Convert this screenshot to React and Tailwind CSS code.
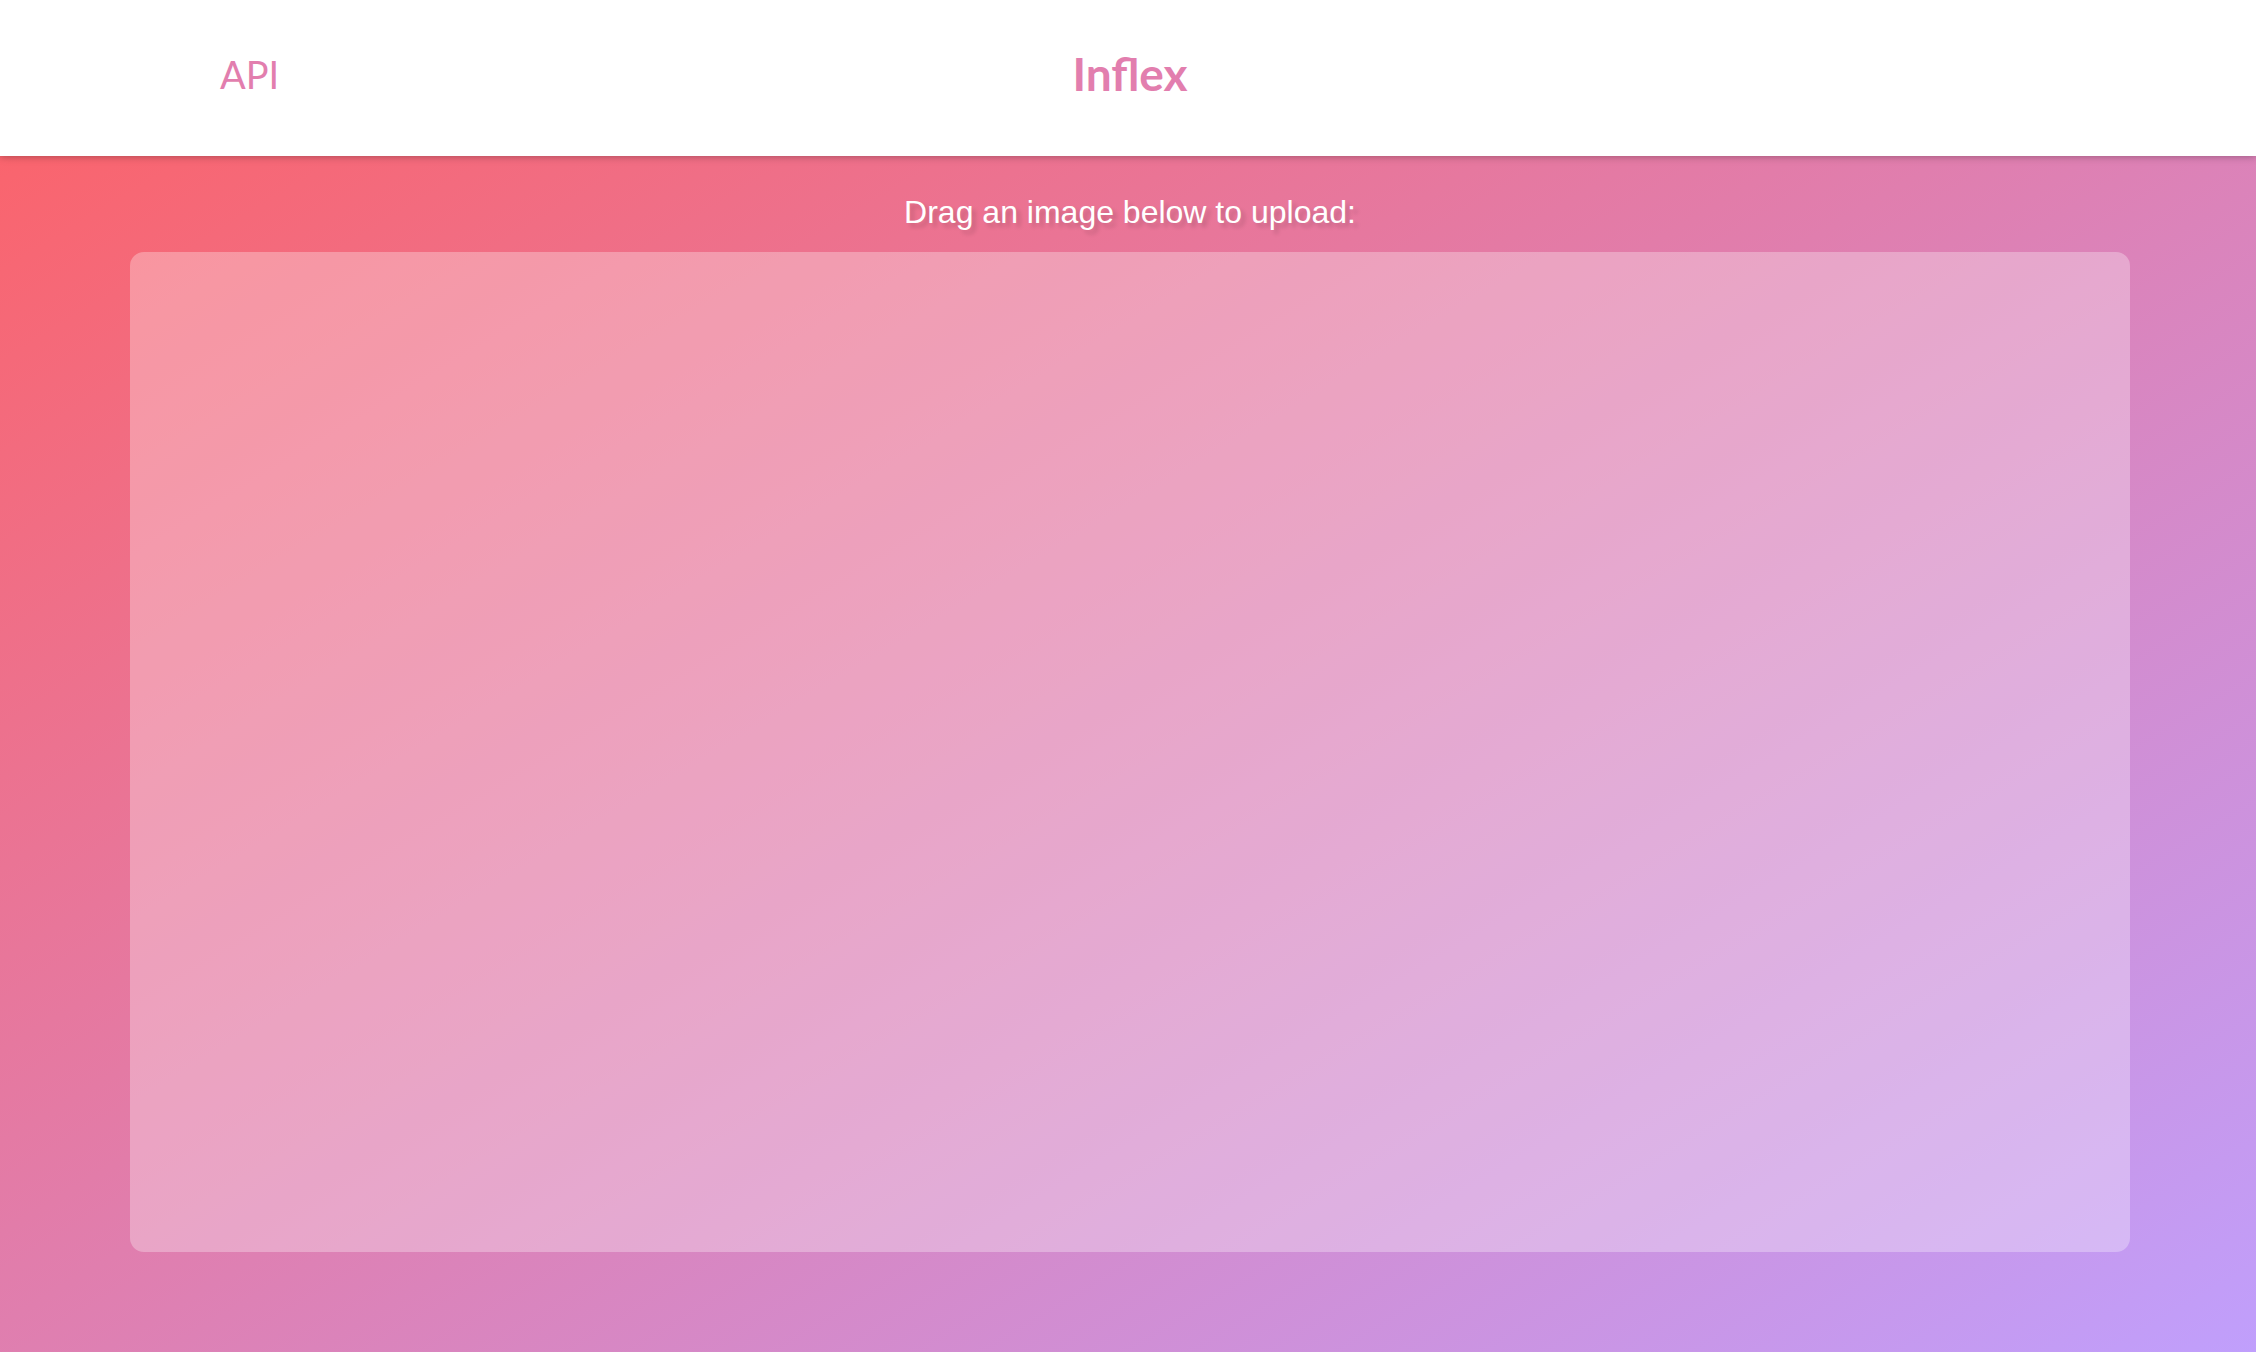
export default function App() {
  return (
    <div className="flex min-h-screen flex-col bg-[linear-gradient(to_bottom_right,#fd6165_0%,#e07eae_49%,#c09ffc_100%)] font-['Liberation_Sans',Arial,sans-serif]">
      <header className="z-10 grid h-39 grid-cols-3 items-center bg-white pb-2 text-[#e27eae] shadow-[0_0_8px_rgba(0,0,0,0.35)]">
        <nav className="pl-55">
          <a href="#api" className="font-['Lato',sans-serif] text-[38px] leading-12 font-normal">API</a>
        </nav>
        <h1 className="pl-1 text-center font-['Lato',sans-serif] text-[46px] leading-14 font-bold">Inflex</h1>
      </header>
      <main className="flex grow flex-col items-center pt-8 pr-[126px] pb-25 pl-[130px]">
        <p className="text-[32px] leading-12 text-white text-shadow-[4px_4px_4px_rgba(0,0,0,0.15)]">Drag an image below to upload:</p>
        <label className="mt-4 w-full grow rounded-[14px] bg-white/30">
          <input type="file" accept="image/*" aria-label="Upload an image" className="sr-only" />
        </label>
      </main>
    </div>
  );
}
